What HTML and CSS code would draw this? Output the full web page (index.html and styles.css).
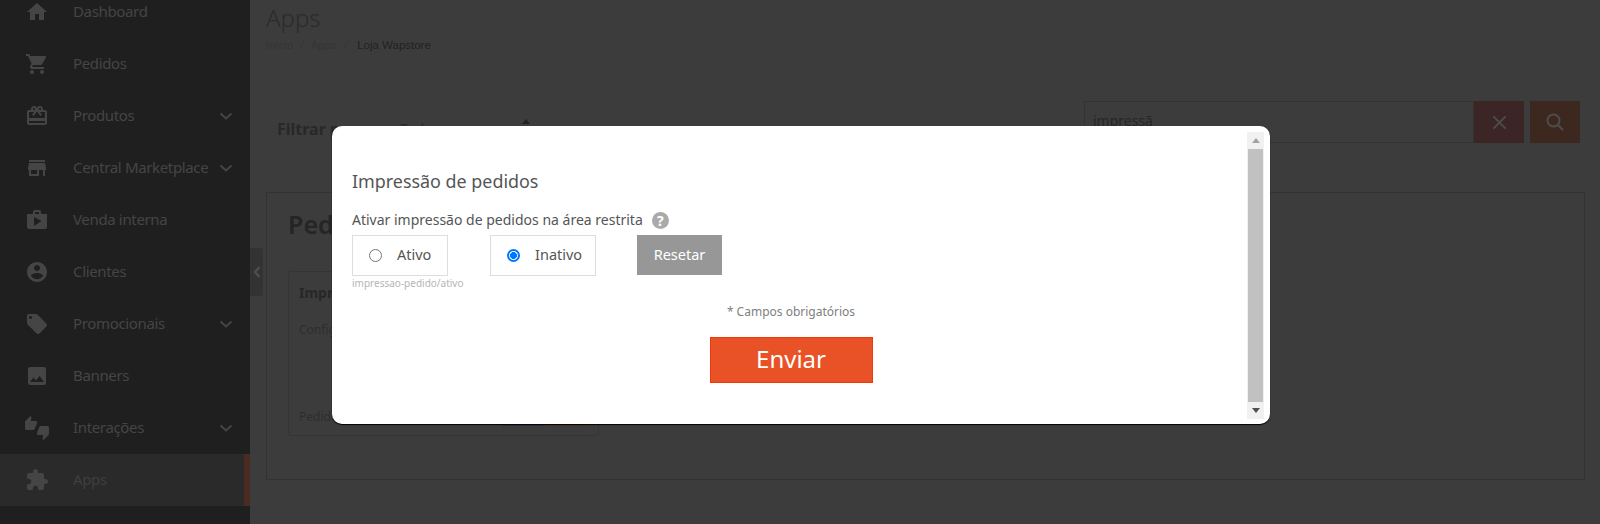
FILE: index.html
```html
<!DOCTYPE html>
<html lang="pt-BR">
<head>
<meta charset="utf-8">
<title>Loja Wapstore</title>
<link rel="stylesheet" href="styles.css">
</head>
<body>
<div class="app">
  <nav class="sidebar">
    <a class="nav-item"><svg class="nav-icon" viewBox="0 0 24 24"><path d="M10 20v-6h4v6h5v-8h3L12 3 2 12h3v8z"/></svg><span class="nav-label">Dashboard</span></a>
    <a class="nav-item"><svg class="nav-icon" viewBox="0 0 24 24"><path d="M7 18c-1.1 0-1.99.9-1.99 2S5.9 22 7 22s2-.9 2-2-.9-2-2-2zM1 2v2h2l3.6 7.59-1.35 2.45c-.16.28-.25.61-.25.96 0 1.1.9 2 2 2h12v-2H7.42c-.14 0-.25-.11-.25-.25l.03-.12.9-1.63h7.45c.75 0 1.41-.41 1.75-1.03l3.58-6.49c.08-.14.12-.31.12-.48 0-.55-.45-1-1-1H5.21l-.94-2H1zm16 16c-1.1 0-1.99.9-1.99 2s.89 2 1.99 2 2-.9 2-2-.9-2-2-2z"/></svg><span class="nav-label">Pedidos</span></a>
    <a class="nav-item"><svg class="nav-icon" viewBox="0 0 24 24"><path d="M20 6h-2.18c.11-.31.18-.65.18-1 0-1.66-1.34-3-3-3-1.05 0-1.96.54-2.5 1.35l-.5.67-.5-.68C10.96 2.54 10.05 2 9 2 7.34 2 6 3.34 6 5c0 .35.07.69.18 1H4c-1.11 0-1.99.89-1.99 2L2 19c0 1.11.89 2 2 2h16c1.11 0 2-.89 2-2V8c0-1.11-.89-2-2-2zm-5-2c.55 0 1 .45 1 1s-.45 1-1 1-1-.45-1-1 .45-1 1-1zM9 4c.55 0 1 .45 1 1s-.45 1-1 1-1-.45-1-1 .45-1 1-1zm11 15H4v-2h16v2zm0-5H4V8h5.08L7 10.83 8.62 12 11 8.76l1-1.36 1 1.36L15.38 12 17 10.83 14.92 8H20v6z"/></svg><span class="nav-label">Produtos</span><svg class="nav-chevron" viewBox="0 0 14 8"><path d="M1.5 1.5 7 6.5l5.5-5"/></svg></a>
    <a class="nav-item"><svg class="nav-icon" viewBox="0 0 24 24"><path d="M20 4H4v2h16V4zm1 10v-2l-1-5H4l-1 5v2h1v6h10v-6h4v6h2v-6h1zm-9 4H6v-4h6v4z"/></svg><span class="nav-label">Central Marketplace</span><svg class="nav-chevron" viewBox="0 0 14 8"><path d="M1.5 1.5 7 6.5l5.5-5"/></svg></a>
    <a class="nav-item"><svg class="nav-icon" viewBox="0 0 24 24"><path d="M16 6V4c0-1.11-.89-2-2-2h-4c-1.11 0-2 .89-2 2v2H2v13c0 1.11.89 2 2 2h16c1.11 0 2-.89 2-2V6h-6zm-6-2h4v2h-4V4zM9 18V9l7.5 4L9 18z"/></svg><span class="nav-label">Venda interna</span></a>
    <a class="nav-item"><svg class="nav-icon" viewBox="0 0 24 24"><path d="M12 2C6.48 2 2 6.48 2 12s4.48 10 10 10 10-4.48 10-10S17.52 2 12 2zm0 3c1.66 0 3 1.34 3 3s-1.34 3-3 3-3-1.34-3-3 1.34-3 3-3zm0 14.2c-2.5 0-4.71-1.28-6-3.22.03-1.99 4-3.08 6-3.08 1.99 0 5.97 1.09 6 3.08-1.29 1.94-3.5 3.22-6 3.22z"/></svg><span class="nav-label">Clientes</span></a>
    <a class="nav-item"><svg class="nav-icon" viewBox="0 0 24 24"><path d="M21.41 11.58l-9-9C12.05 2.22 11.55 2 11 2H4c-1.1 0-2 .9-2 2v7c0 .55.22 1.05.59 1.42l9 9c.36.36.86.58 1.41.58.55 0 1.05-.22 1.41-.59l7-7c.37-.36.59-.86.59-1.41 0-.55-.23-1.06-.59-1.42zM5.5 7C4.67 7 4 6.33 4 5.5S4.67 4 5.5 4 7 4.67 7 5.5 6.33 7 5.5 7z"/></svg><span class="nav-label">Promocionais</span><svg class="nav-chevron" viewBox="0 0 14 8"><path d="M1.5 1.5 7 6.5l5.5-5"/></svg></a>
    <a class="nav-item"><svg class="nav-icon" viewBox="0 0 24 24"><path d="M21 19V5c0-1.1-.9-2-2-2H5c-1.1 0-2 .9-2 2v14c0 1.1.9 2 2 2h14c1.1 0 2-.9 2-2zM8.5 13.5l2.5 3.01L14.5 12l4.5 6H5l3.5-4.5z"/></svg><span class="nav-label">Banners</span></a>
    <a class="nav-item"><svg class="nav-icon" viewBox="0 0 24 24"><path d="M12 6c0-.55-.45-1-1-1H5.82l.66-3.18.02-.23c0-.31-.13-.59-.33-.8L5.38 0 .44 4.94C.17 5.21 0 5.59 0 6v6.5c0 .83.67 1.5 1.5 1.5h6.75c.62 0 1.15-.38 1.38-.91l2.26-5.29c.07-.17.11-.36.11-.55V6zm10.5 4h-6.75c-.62 0-1.15.38-1.38.91l-2.26 5.29c-.07.17-.11.36-.11.55V18c0 .55.45 1 1 1h5.18l-.66 3.18-.02.24c0 .31.13.59.33.8l.79.78 4.94-4.94c.27-.27.44-.65.44-1.06v-6.5c0-.83-.67-1.5-1.5-1.5z"/></svg><span class="nav-label">Interações</span><svg class="nav-chevron" viewBox="0 0 14 8"><path d="M1.5 1.5 7 6.5l5.5-5"/></svg></a>
    <a class="nav-item is-active"><svg class="nav-icon" viewBox="0 0 24 24"><path d="M20.5 11H19V7c0-1.1-.9-2-2-2h-4V3.5C13 2.12 11.88 1 10.5 1S8 2.12 8 3.5V5H4c-1.1 0-1.99.9-1.99 2v3.8H3.5c1.49 0 2.7 1.21 2.7 2.7s-1.21 2.7-2.7 2.7H2V20c0 1.1.9 2 2 2h3.8v-1.5c0-1.49 1.21-2.7 2.7-2.7 1.49 0 2.7 1.21 2.7 2.7V22H17c1.1 0 2-.9 2-2v-4h1.5c1.38 0 2.5-1.12 2.5-2.5S21.88 11 20.5 11z"/></svg><span class="nav-label">Apps</span></a>
  </nav>

  <button class="collapse-tab"><svg viewBox="0 0 8 12"><path d="M6.5 1 2 6l4.5 5"/></svg></button>

  <main class="content">
    <h1 class="page-title">Apps</h1>
    <div class="crumbs"><span>Início</span><i>/</i><span>Apps</span><i>/</i><b>Loja Wapstore</b></div>

    <div class="filter-row">
      <div class="filter-left">
        <strong class="filter-label">Filtrar por</strong>
        <span class="filter-select">Todos</span>
      </div>
      <div class="search">
        <div class="search-input">impressã</div>
        <button class="search-btn is-clear"><svg viewBox="0 0 16 16"><path d="M1.5 1.5l13 13M14.5 1.5l-13 13"/></svg></button>
        <button class="search-btn is-go"><svg viewBox="0 0 18 18"><circle cx="7.5" cy="7.5" r="6"/><path d="M12 12l5 5"/></svg></button>
      </div>
    </div>

    <section class="panel">
      <h2 class="panel-title">Pedidos</h2>
      <article class="app-card">
        <h3 class="app-card-title">Impressão de pedidos</h3>
        <p class="app-card-text">Configure</p>
        <div class="app-card-foot">
          <span>Pedidos</span>
          <div class="app-card-btns"><span class="mini-btn is-blue"></span><span class="mini-btn is-orange"></span></div>
        </div>
      </article>
    </section>
  </main>
</div>

<div class="modal">
  <div class="modal-body">
    <h4 class="modal-title">Impressão de pedidos</h4>
    <div class="field-label">Ativar impressão de pedidos na área restrita <span class="help">?</span></div>
    <div class="options">
      <div class="option-col">
        <label class="option is-ativo"><span class="radio"></span><span class="option-text">Ativo</span></label>
        <small class="field-key">impressao-pedido/ativo</small>
      </div>
      <label class="option is-inativo"><span class="radio is-on"></span><span class="option-text">Inativo</span></label>
      <button class="reset">Resetar</button>
    </div>
    <p class="required">* Campos obrigatórios</p>
    <div class="submit-row"><button class="submit">Enviar</button></div>
  </div>
  <div class="scrollbar">
    <span class="scroll-arrow"><svg viewBox="0 0 8 5"><path d="M4 0l4 5H0z"/></svg></span>
    <span class="scroll-thumb"></span>
    <span class="scroll-arrow is-down"><svg viewBox="0 0 8 5"><path d="M0 0h8L4 5z"/></svg></span>
  </div>
</div>
</body>
</html>
```

FILE: styles.css
```css
* { box-sizing: border-box; }
html, body { margin: 0; height: 524px; overflow: hidden; }
body { background: #3c3c3c; font-family: "Noto Sans", sans-serif; color: #2c2c2c; position: relative; }
button { font-family: inherit; border: 0; padding: 0; }
h1, h2, h3, h4, p { margin: 0; font-weight: 400; }

.app { display: flex; height: 524px; }

.sidebar { width: 250px; flex: none; background: #1f1f1f; margin-top: -14px; height: 538px; }
.nav-item { display: flex; align-items: center; height: 52px; padding-left: 25px; color: #454545; font-size: 15px; letter-spacing: -.35px; }
.nav-icon { width: 24px; height: 24px; fill: #454545; flex: none; }
.nav-label { margin-left: 24px; flex: 1; white-space: nowrap; padding-bottom: 2px; }
.nav-chevron { width: 14px; height: 8px; margin-right: 17px; fill: none; stroke: #454545; stroke-width: 2; flex: none; }
.nav-item.is-active { background: #2a2a2a; border-right: 6px solid #4a2b22; color: #3f3f3f; }

.collapse-tab { position: absolute; left: 250px; top: 248px; width: 13px; height: 48px; background: #333; border-radius: 0 3px 3px 0; display: flex; align-items: center; justify-content: center; }
.collapse-tab svg { width: 8px; height: 12px; fill: none; stroke: #505050; stroke-width: 2; }

.content { flex: 1; padding: 4px 15px 0 16px; min-width: 0; }
.page-title { font-size: 24px; line-height: 28px; font-weight: 300; color: #2b2b2b; }
.crumbs { font-family: "Liberation Sans", sans-serif; font-size: 11.5px; color: #353535; margin-top: 6px; line-height: 14px; display: flex; gap: 7px; }
.crumbs i { font-style: normal; }
.crumbs b { font-weight: 400; color: #222; margin-left: 3px; }

.filter-row { display: flex; justify-content: space-between; margin-top: 49px; height: 42px; }
.filter-left { display: flex; align-items: center; padding-left: 11px; gap: 43px; height: 55px; }
.filter-label { font-size: 16px; color: #282828; }
.filter-select { font-size: 14px; color: #2a2a2a; width: 130px; display: flex; justify-content: space-between; align-items: center; }
.filter-select::after { content: ""; border: 4px solid transparent; border-bottom: 5px solid #222; border-top: 0; margin-top: -15px; }

.search { display: flex; width: 496px; margin-right: 5px; }
.search-input { width: 390px; height: 42px; border: 1px solid #333; padding: 10px 8px 0; font-size: 14px; line-height: 18px; color: #262626; }
.search-btn { width: 50px; height: 42px; display: flex; align-items: center; justify-content: center; }
.search-btn svg { fill: none; stroke: #4d4d4d; stroke-width: 2; width: 15px; height: 15px; }
.search-btn.is-go svg { width: 18px; height: 18px; }
.search-btn.is-clear { background: #3c2525; }
.search-btn.is-go { background: #3d2820; margin-left: 6px; }

.panel { margin-top: 49px; width: 1319px; height: 288px; border: 1px solid #333; padding: 12px 21px; }
.panel-title { font-size: 25px; line-height: 38px; font-weight: 600; color: #252525; }
.app-card { width: 311px; height: 165px; margin-top: 28px; border: 1px solid #353535; border-radius: 3px; padding: 11px 10px 9px; display: flex; flex-direction: column; }
.app-card-title { font-size: 14px; line-height: 20px; font-weight: 700; color: #272727; white-space: nowrap; }
.app-card-text { font-size: 12px; line-height: 18px; margin-top: 18px; color: #2e2e2e; white-space: nowrap; }
.app-card-foot { margin-top: auto; display: flex; justify-content: space-between; align-items: flex-end; font-size: 12px; line-height: 18px; color: #2e2e2e; }
.app-card-btns { display: flex; gap: 2px; }
.mini-btn { width: 42px; height: 20px; display: block; }
.mini-btn.is-blue { background: #2b3242; }
.mini-btn.is-orange { background: #4a3a1f; }

.modal { position: absolute; left: 332px; top: 126px; width: 938px; height: 298px; background: #fff; border-radius: 10px; box-shadow: 0 1px 1px #000; }
.modal-body { padding: 43px 40px 0 20px; height: 100%; }
.modal-title { font-size: 17.9px; line-height: 24px; color: #555; }
.field-label { font-size: 14px; line-height: 20px; color: #555; margin-top: 17px; display: flex; align-items: center; gap: 9px; }
.help { width: 17px; height: 17px; border-radius: 50%; background: #aaa; color: #fff; font-size: 14px; font-weight: 700; line-height: 17px; text-align: center; }
.options { display: flex; align-items: flex-start; margin-top: 5px; }
.option-col { display: flex; flex-direction: column; width: 138px; }
.option { height: 41px; border: 1px solid #ddd; display: flex; align-items: center; font-size: 14.5px; color: #555; padding-left: 16px; }
.option-text { padding-bottom: 3px; }
.option.is-ativo { width: 96px; }
.option.is-inativo { width: 106px; }
.radio { width: 13px; height: 13px; border: 1px solid #767676; border-radius: 50%; margin-right: 15px; flex: none; }
.radio.is-on { border: 2px solid #0075ff; background: radial-gradient(circle, #0075ff 0 3.2px, #fff 3.7px); }
.field-key { font-size: 10px; line-height: 14px; color: #b5b5b5; white-space: nowrap; }
.reset { margin-left: 41px; width: 85px; height: 40px; background: #979797; color: #fff; font-size: 14.5px; padding-bottom: 2px; }
.required { text-align: center; font-size: 12px; line-height: 16px; color: #808080; margin-top: 14px; }
.submit-row { display: flex; justify-content: center; margin-top: 17px; }
.submit { width: 163px; height: 46px; background: #e95226; border: 1px solid #f03a0e; color: #fff; font-size: 24px; padding-bottom: 3px; }

.scrollbar { position: absolute; right: 6px; top: 6px; bottom: 5px; width: 17px; background: #f1f1f1; display: flex; flex-direction: column; align-items: center; }
.scroll-arrow { height: 17px; flex: none; display: flex; align-items: center; justify-content: center; }
.scroll-arrow svg { width: 8px; height: 5px; fill: #a3a3a3; }
.scroll-arrow.is-down svg { fill: #505050; }
.scroll-thumb { flex: 1; width: 15px; background: #c1c1c1; }
```
